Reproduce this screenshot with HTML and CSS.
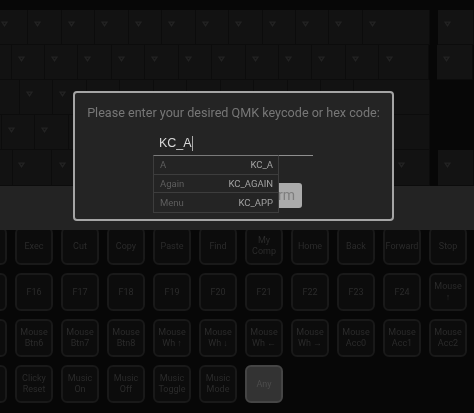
FILE: index.html
```html
<!DOCTYPE html>
<html lang="en">
<head>
<meta charset="utf-8">
<title>Any key</title>
<link rel="stylesheet" href="styles.css">
</head>
<body>
<svg class="defs" width="0" height="0" aria-hidden="true"><defs><symbol id="tri" viewBox="0 0 8 7"><path d="M1.2 1.4H6.8L4 5.6Z" fill="none" stroke="currentColor" stroke-width="1.5"/></symbol></defs></svg>
<main class="page">
  <section class="board">
    <div class="row row-1">
      <div class="key"><svg class="tri"><use href="#tri"/></svg></div><div class="key"><svg class="tri"><use href="#tri"/></svg></div><div class="key"><svg class="tri"><use href="#tri"/></svg></div><div class="key"><svg class="tri"><use href="#tri"/></svg></div><div class="key"><svg class="tri"><use href="#tri"/></svg></div><div class="key"><svg class="tri"><use href="#tri"/></svg></div><div class="key"><svg class="tri"><use href="#tri"/></svg></div><div class="key"><svg class="tri"><use href="#tri"/></svg></div><div class="key"><svg class="tri"><use href="#tri"/></svg></div><div class="key"><svg class="tri"><use href="#tri"/></svg></div><div class="key"><svg class="tri"><use href="#tri"/></svg></div>
      <div class="key key-fill"><svg class="tri"><use href="#tri"/></svg></div>
      <div class="key key-side"><svg class="tri"><use href="#tri"/></svg></div>
    </div>
    <div class="row row-2">
      <div class="key key-start"></div>
      <div class="key"><svg class="tri"><use href="#tri"/></svg></div><div class="key"><svg class="tri"><use href="#tri"/></svg></div><div class="key"><svg class="tri"><use href="#tri"/></svg></div><div class="key"><svg class="tri"><use href="#tri"/></svg></div><div class="key"><svg class="tri"><use href="#tri"/></svg></div><div class="key"><svg class="tri"><use href="#tri"/></svg></div><div class="key"><svg class="tri"><use href="#tri"/></svg></div><div class="key"><svg class="tri"><use href="#tri"/></svg></div><div class="key"><svg class="tri"><use href="#tri"/></svg></div><div class="key"><svg class="tri"><use href="#tri"/></svg></div><div class="key"><svg class="tri"><use href="#tri"/></svg></div>
      <div class="key key-fill"><svg class="tri"><use href="#tri"/></svg></div>
      <div class="key key-side"><svg class="tri"><use href="#tri"/></svg></div>
    </div>
    <div class="row row-3">
      <div class="key key-start"></div>
      <div class="key"><svg class="tri"><use href="#tri"/></svg></div><div class="key"><svg class="tri"><use href="#tri"/></svg></div><div class="key"></div><div class="key"></div><div class="key"></div><div class="key"></div><div class="key"></div><div class="key"></div><div class="key"></div><div class="key"></div>
      <div class="key key-fill"></div>
    </div>
    <div class="row row-4">
      <div class="key key-start"></div>
      <div class="key"><svg class="tri"><use href="#tri"/></svg></div><div class="key"><svg class="tri"><use href="#tri"/></svg></div><div class="key"></div><div class="key"></div><div class="key"></div><div class="key"></div><div class="key"></div><div class="key"></div><div class="key"></div><div class="key"></div><div class="key"></div>
      <div class="key key-fill"></div>
    </div>
    <div class="row row-5">
      <div class="key key-start"></div>
      <div class="key key-mod"><svg class="tri"><use href="#tri"/></svg></div>
      <div class="key key-mod"><svg class="tri"><use href="#tri"/></svg></div>
      <div class="key key-fill"></div>
      <div class="key key-end"><svg class="tri"><use href="#tri"/></svg></div>
      <div class="key key-side"><svg class="tri"><use href="#tri"/></svg></div>
    </div>
  </section>
  <div class="bar"></div>
  <section class="grid">
    <div class="cap"></div><div class="cap">Exec</div><div class="cap">Cut</div><div class="cap">Copy</div><div class="cap">Paste</div><div class="cap">Find</div><div class="cap">My<br>Comp</div><div class="cap">Home</div><div class="cap">Back</div><div class="cap">Forward</div><div class="cap">Stop</div>
    <div class="cap"></div><div class="cap">F16</div><div class="cap">F17</div><div class="cap">F18</div><div class="cap">F19</div><div class="cap">F20</div><div class="cap">F21</div><div class="cap">F22</div><div class="cap">F23</div><div class="cap">F24</div><div class="cap">Mouse<br>↑</div>
    <div class="cap"></div><div class="cap">Mouse<br>Btn6</div><div class="cap">Mouse<br>Btn7</div><div class="cap">Mouse<br>Btn8</div><div class="cap">Mouse<br>Wh ↑</div><div class="cap">Mouse<br>Wh ↓</div><div class="cap">Mouse<br>Wh ←</div><div class="cap">Mouse<br>Wh →</div><div class="cap">Mouse<br>Acc0</div><div class="cap">Mouse<br>Acc1</div><div class="cap">Mouse<br>Acc2</div>
    <div class="cap"></div><div class="cap">Clicky<br>Reset</div><div class="cap">Music<br>On</div><div class="cap">Music<br>Off</div><div class="cap">Music<br>Toggle</div><div class="cap">Music<br>Mode</div><div class="cap cap-any">Any</div>
  </section>
</main>
<div class="modal">
  <p class="prompt">Please enter your desired QMK keycode or hex code:</p>
  <div class="field"><span class="typed">KC_A</span><span class="caret"></span></div>
  <ul class="suggest">
    <li class="option"><span>A</span><span class="code">KC_A</span></li>
    <li class="option"><span>Again</span><span class="code">KC_AGAIN</span></li>
    <li class="option"><span>Menu</span><span class="code">KC_APP</span></li>
  </ul>
  <button class="confirm" type="button">Confirm</button>
</div>
</body>
</html>
```
FILE: styles.css
```css
* { box-sizing: border-box; }
html, body { margin: 0; height: 100%; }
body {
  width: 474px;
  height: 413px;
  overflow: hidden;
  position: relative;
  background: #070707;
  font-family: Roboto, "Open Sans", sans-serif;
}
.defs { position: absolute; }
.page { display: flex; flex-direction: column; height: 413px; filter: blur(0.4px); }

.board {
  height: 176px;
  margin-top: 10px;
  margin-left: -5px;
  width: 479px;
  display: flex;
  flex-direction: column;
  flex: none;
  overflow: hidden;
}
.row { display: flex; height: 35px; flex: none; }
.row-5 { height: 36px; }
.key {
  flex: none;
  width: 33.45px;
  height: 100%;
  padding: 11px 0 0 6px;
  background: #121212;
  border: 0 solid #0c0c0c;
  border-width: 0 1.5px 1.5px 0;
  color: #232323;
}
.tri { display: block; width: 7px; height: 6px; }
.key-side { margin-left: 8px; width: 36px; background: #131313; }
.row-1 .key-fill { width: 67px; }
.row-2 .key-start { width: 16.5px; }
.row-2 .key-fill { width: 49.6px; padding-left: 7px; }
.row-3 .key-start { width: 25px; }
.row-3 .key-fill { width: 75.5px; }
.row-4 .key-start { width: 7px; }
.row-4 .key-fill { width: 60.5px; }
.row-5 .key-start { width: 18px; }
.row-5 .key-mod { width: 39px; padding-left: 5px; }
.row-5 .key-mod + .key-mod { width: 40px; padding-left: 7px; }
.row-5 .key-fill { width: 300px; }
.row-5 .key-end { width: 38px; }
.row-4 .key, .row-5 .key { padding-top: 12px; }

.bar { height: 44px; flex: none; background: #232323; position: relative; z-index: 1; }

.grid {
  margin-top: -3px;
  margin-left: -31px;
  display: grid;
  grid-template-columns: repeat(11, 38px);
  grid-auto-rows: 38px;
  gap: 8px;
}
.cap {
  display: flex;
  align-items: center;
  justify-content: center;
  text-align: center;
  border: 2px solid #191919;
  border-radius: 6px;
  background: #0c0c0c;
  color: #2b2b2b;
  font-size: 9px;
  line-height: 11px;
  white-space: nowrap;
}
.cap-any { background: #333; border-color: #454545; color: #4c4c4c; }

.modal {
  position: absolute;
  z-index: 5;
  left: 73px;
  top: 91px;
  width: 321px;
  height: 130px;
  background: #242424;
  border: 2px solid #a5a5a5;
  border-radius: 4px;
  filter: blur(0.3px);
}
.prompt {
  margin: 11px 0 0;
  text-align: center;
  color: #777;
  font-size: 12.6px;
  line-height: 17px;
  white-space: nowrap;
}
.field {
  position: absolute;
  left: 78px;
  top: 38px;
  width: 160px;
  height: 25px;
  padding: 4px 0 0 6px;
  display: flex;
  align-items: flex-start;
  border-bottom: 1px solid #8f8f8f;
  color: #d8d8d8;
  font-family: "Liberation Sans", Arial, sans-serif;
  font-size: 12.5px;
  line-height: 17px;
}
.caret { width: 1px; height: 15px; margin: 1px 0 0 0; background: #aaa; }
.suggest {
  position: absolute;
  z-index: 2;
  left: 78px;
  top: 62px;
  width: 126px;
  margin: 0;
  padding: 0;
  list-style: none;
  background: #242424;
  border: 1px solid #3d3d3d;
  border-top-color: #7a7a7a;
  font-size: 9.5px;
}
.option {
  display: flex;
  justify-content: space-between;
  align-items: center;
  height: 18.7px;
  padding: 0 5px 0 6px;
  color: #5e5e5e;
  border-bottom: 1px solid #3d3d3d;
}
.option:last-child { border-bottom: 0; }
.code { color: #a2a2a2; }
.confirm {
  position: absolute;
  right: 90px;
  top: 90px;
  width: 70px;
  height: 25px;
  padding: 0 7px 0 0;
  border: 0;
  border-radius: 3px;
  background: #ababab;
  color: #7e7e7e;
  font: 14px/25px Roboto, sans-serif;
  text-align: right;
}
```
